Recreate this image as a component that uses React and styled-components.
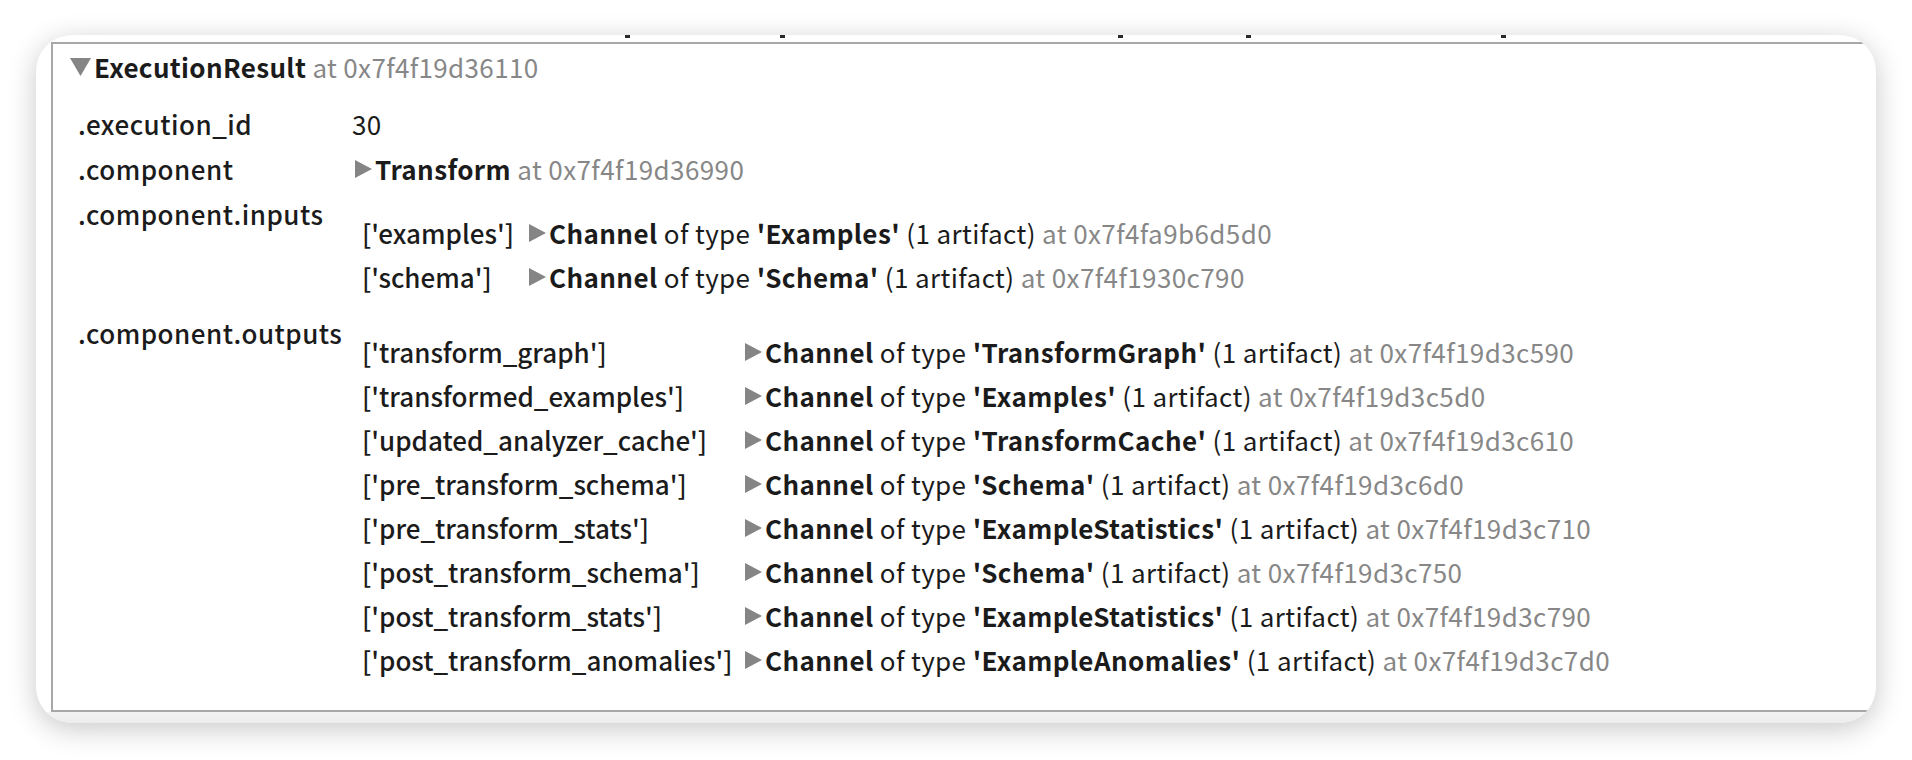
import React from "react";
import styled, { createGlobalStyle } from "styled-components";

const GlobalStyle = createGlobalStyle`
  html, body {
    margin: 0;
    padding: 0;
    background: #ffffff;
  }
  body {
    font-family: "Noto Sans CJK KR", "Noto Sans", sans-serif;
    color: #1b1b1b;
  }
`;

const Page = styled.div`
  width: 1912px;
  height: 760px;
  box-sizing: border-box;
  padding: 35px 36px 0 36px;
  overflow: hidden;
`;

const Card = styled.div`
  height: 688px;
  background: #ffffff;
  border-radius: 36px;
  overflow: hidden;
  box-shadow: 0 6px 28px rgba(0, 0, 0, 0.22);
  display: flex;
  flex-direction: column;
`;

// bottoms of the clipped line above the frame
const CutLine = styled.div`
  position: relative;
  height: 7px;
  flex: none;
`;

const CutMark = styled.span`
  position: absolute;
  top: 0;
  width: 5px;
  height: 3px;
  background: #2a2a2a;
`;

const Frame = styled.div`
  flex: 1;
  margin-left: 15px;
  border: 2px solid #a8a8a8;
  border-right: none;
  padding: 1px 0 0 17px;
  font-size: 26px;
  line-height: 44px;
`;

const BottomStrip = styled.div`
  height: 11px;
  flex: none;
  background: linear-gradient(#f3f3f3, #ececec);
`;

const Title = styled.div`
  display: flex;
  align-items: center;
  height: 44px;
  white-space: nowrap;
  letter-spacing: 0.35px;
`;

const Bold = styled.span`
  font-weight: 700;
`;

const Dim = styled.span`
  color: #878787;
`;

const AttrTable = styled.div`
  display: grid;
  grid-template-columns: ${(p) => p.$keyWidth}px auto;
  margin-top: ${(p) => p.$top}px;
  margin-left: ${(p) => p.$left}px;
  margin-bottom: ${(p) => p.$bottom || 0}px;
  line-height: ${(p) => p.$row}px;
  white-space: nowrap;
`;

const AttrName = styled.div`
  align-self: start;
  font-weight: 500;
  letter-spacing: ${(p) => p.$spacing || 0}px;
`;

const AttrValue = styled.div`
  display: flex;
  align-items: center;
  align-self: start;
  min-height: ${(p) => p.$row || 44}px;
  letter-spacing: 0.4px;
`;

const MarkerBox = styled.svg`
  flex: none;
  margin-left: ${(p) => p.$shift || 0}px;
  margin-right: 2px;
`;

const Marker = ({ open, shift }) =>
  open ? (
    <MarkerBox width="22" height="20" viewBox="0 0 22 20" $shift={shift}>
      <polygon points="0,1 21,1 10.5,19" fill="#858585" />
    </MarkerBox>
  ) : (
    <MarkerBox width="18" height="20" viewBox="0 0 18 20" $shift={shift}>
      <polygon points="0,1 17,10 0,19" fill="#858585" />
    </MarkerBox>
  );

const Channel = ({ type, at }) => (
  <>
    <Marker />
    <Bold>Channel</Bold>&nbsp;of type&nbsp;<Bold>'{type}'</Bold>&nbsp;(1 artifact)&nbsp;
    <Dim>at {at}</Dim>
  </>
);

const inputs = [
  ["examples", "Examples", "0x7f4fa9b6d5d0"],
  ["schema", "Schema", "0x7f4f1930c790"],
];

const outputs = [
  ["transform_graph", "TransformGraph", "0x7f4f19d3c590"],
  ["transformed_examples", "Examples", "0x7f4f19d3c5d0"],
  ["updated_analyzer_cache", "TransformCache", "0x7f4f19d3c610"],
  ["pre_transform_schema", "Schema", "0x7f4f19d3c6d0"],
  ["pre_transform_stats", "ExampleStatistics", "0x7f4f19d3c710"],
  ["post_transform_schema", "Schema", "0x7f4f19d3c750"],
  ["post_transform_stats", "ExampleStatistics", "0x7f4f19d3c790"],
  ["post_transform_anomalies", "ExampleAnomalies", "0x7f4f19d3c7d0"],
];

const ChannelTable = ({ rows, keyWidth, bottom }) => (
  <AttrTable $keyWidth={keyWidth} $top={20} $left={10} $bottom={bottom} $row={44}>
    {rows.map(([key, type, at]) => (
      <React.Fragment key={key}>
        <AttrName>['{key}']</AttrName>
        <AttrValue>
          <Channel type={type} at={at} />
        </AttrValue>
      </React.Fragment>
    ))}
  </AttrTable>
);

const cutMarks = [589, 744, 1082, 1210, 1465];

export default function App() {
  return (
    <>
      <GlobalStyle />
      <Page>
        <Card>
          <CutLine>
            {cutMarks.map((x) => (
              <CutMark key={x} style={{ left: x }} />
            ))}
          </CutLine>
          <Frame>
            <Title>
              <Marker open />
              <Bold>ExecutionResult</Bold>&nbsp;<Dim>at 0x7f4f19d36110</Dim>
            </Title>
            <AttrTable $keyWidth={274} $top={12} $left={8} $row={45}>
              <AttrName $spacing={0.5}>.execution_id</AttrName>
              <AttrValue $row={45}>30</AttrValue>
              <AttrName $spacing={0.5}>.component</AttrName>
              <AttrValue $row={45}>
                <Marker shift={3} />
                <Bold>Transform</Bold>&nbsp;<Dim>at 0x7f4f19d36990</Dim>
              </AttrValue>
              <AttrName $spacing={0.5}>.component.inputs</AttrName>
              <div>
                <ChannelTable rows={inputs} keyWidth={167} bottom={11} />
              </div>
              <AttrName $spacing={0.5}>.component.outputs</AttrName>
              <div>
                <ChannelTable rows={outputs} keyWidth={383} />
              </div>
            </AttrTable>
          </Frame>
          <BottomStrip />
        </Card>
      </Page>
    </>
  );
}
